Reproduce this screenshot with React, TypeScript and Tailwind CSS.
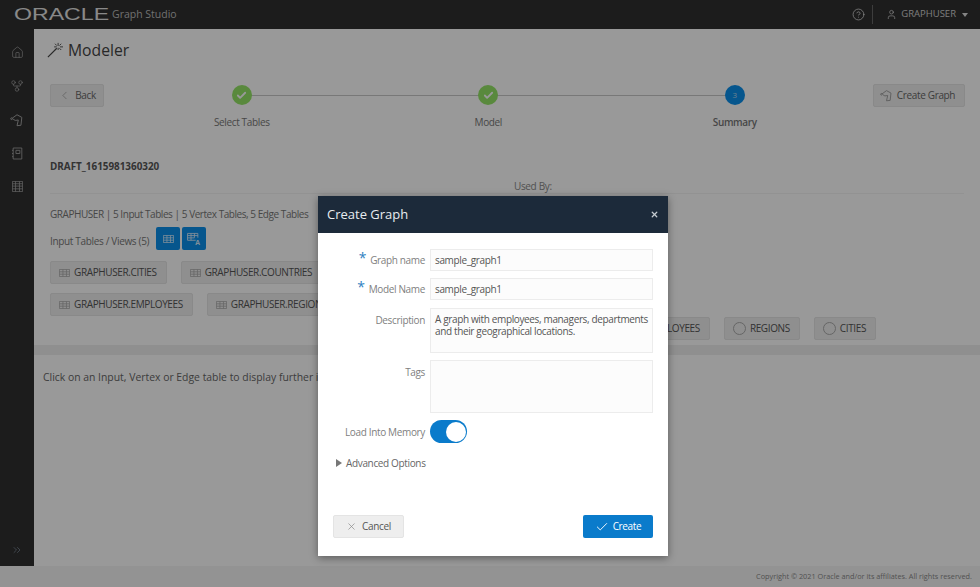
import React from 'react'
import { Check, ChevronLeft, ChevronsRight, CircleHelp, House, User, X, GitFork } from 'lucide-react'

function TableIcon({ className = '' }: { className?: string }) {
  return (
    <svg viewBox="0 0 14 10" className={className} fill="none" stroke="currentColor" strokeWidth="1">
      <path d="M.5.5h13v9H.5zM.5 3.500h13M.5 6.500h13M5 .5v9M9.500 .5v9" />
    </svg>
  )
}

function GraphIcon({ className = '' }: { className?: string }) {
  return (
    <svg viewBox="0 0 16 16" className={className} fill="none" stroke="currentColor" strokeWidth="1.1">
      <path d="M2.500 6 8 2l5.500 3-1 9-4.500.5L9.500 8 6 8.500 3.500 7" />
      <circle cx="1.800" cy="6.500" r="1" />
    </svg>
  )
}

function WandIcon({ className = '' }: { className?: string }) {
  return (
    <svg viewBox="0 0 18 18" className={className} fill="none" stroke="currentColor" strokeWidth="1">
      <path d="M1 17 11 7" strokeWidth="1.300" />
      <path d="M12.500 1v3.500M12.500 6.500V9M8 5.500h3M14.500 5.500H18M9 2l2 2M16 2l-2 2M14 7l2 2" />
    </svg>
  )
}

function NotebookIcon({ className = '' }: { className?: string }) {
  return (
    <svg viewBox="0 0 14 16" className={className} fill="none" stroke="currentColor" strokeWidth="1.1">
      <path d="M1.500 1h11v14h-11zM5 4h5v4H5z" />
      <path d="M0 4h1.500M0 8h1.500M0 12h1.500" />
    </svg>
  )
}

function PanelIcon({ className = '' }: { className?: string }) {
  return (
    <svg viewBox="0 0 14 14" className={className} fill="none" stroke="currentColor" strokeWidth="1">
      <path d="M.5.5h13v13H.5zM.5 3.500h13M.5 6.500h13M.5 10h13M4.500 .5v13M9.500 .5v13" />
    </svg>
  )
}

function TableLetterIcon({ className = '' }: { className?: string }) {
  return (
    <svg viewBox="0 0 16 14" className={`overflow-visible ${className}`} fill="none" stroke="currentColor" strokeWidth="1">
      <path d="M10 8.500H.5V.5h12v5M.5 3h12M.5 5.700h8M4.500 .5v8M8.500 .5v5" />
      <text x="9.500" y="13.500" fontSize="8" fontWeight="700" fill="currentColor" stroke="none">A</text>
    </svg>
  )
}

function Chip({ label, circle }: { label: string; circle?: boolean }) {
  return (
    <div className="h-[23px] flex items-center shrink-0 pl-[8px] pr-[9px] gap-[4px] bg-[#eeeeee] border border-[#e4e4e4] rounded-[2px] text-[#555] text-[10px] tracking-[-0.38px]">
      {circle ? (
        <span className="w-[13px] h-[13px] rounded-full border border-[#aaa]" />
      ) : (
        <TableIcon className="w-[11px] h-[8px] text-[#aaa]" />
      )}
      <span>{label}</span>
    </div>
  )
}

function Step({ label, done, num, bold }: { label: string; done?: boolean; num?: string; bold?: boolean }) {
  return (
    <div className="w-[246.5px] flex flex-col items-center">
      <div className={`relative w-[20px] h-[20px] rounded-full flex items-center justify-center text-[8px] text-[#bcd8ee] ${done ? 'bg-[#94e566]' : 'bg-[#0a90ec]'}`}>
        {done ? <Check className="w-[11px] h-[11px] text-white" strokeWidth={4} /> : num}
      </div>
      <span className={`mt-[10px] leading-[14px] text-[10px] tracking-[-0.35px] text-[#777] ${bold ? 'font-semibold' : ''}`}>{label}</span>
    </div>
  )
}

function Field({ label, req, value, area }: { label: string; req?: boolean; value?: string; area?: string }) {
  return (
    <div className="flex gap-[5px]">
      <div className={`w-[92px] shrink-0 text-right text-[10px] tracking-[-0.35px] leading-[14px] text-[#808080] whitespace-nowrap ${area ? 'pt-[5px]' : 'pt-[3px]'}`}>
        {req && <span className="text-[#2f7fc1] text-[14px] leading-none mr-[4px] relative -top-[1px]">*</span>}
        {label}
      </div>
      <div className={`w-[223px] border border-[#ececec] bg-[#fcfcfc] px-[4px] text-[10px] tracking-[-0.36px] leading-[12px] text-[#555] ${area ? `${area} pt-[4px]` : 'h-[22px] flex items-center'}`}>
        {value}
      </div>
    </div>
  )
}

export default function App() {
  return (
    <div className="relative w-[980px] h-[587px] overflow-hidden bg-white font-['Open_Sans','Noto_Sans',sans-serif] flex flex-col">
      <header className="h-[29px] shrink-0 bg-[#2f2f2f] flex items-center pl-[14px] pr-[12px] text-[#dddddd]">
        <span className="font-['Liberation_Sans',sans-serif] text-[17px] leading-none inline-block w-[94px] origin-left scale-x-[1.36] text-[#e4e4e4]">ORACLE</span>
        <span className="text-[10.500px] ml-[4px] text-[#bdbdbd]">Graph Studio</span>
        <div className="ml-auto flex items-center text-[#e0e0e0]">
          <CircleHelp className="w-[13px] h-[13px]" strokeWidth={1.4} />
          <span className="w-px h-[19px] bg-[#666] ml-[7px] mr-[13px]" />
          <User className="w-[11px] h-[11px]" strokeWidth={1.5} />
          <span className="text-[9.500px] ml-[4px] text-[#cfcfcf]">GRAPHUSER</span>
          <span className="ml-[6px] w-0 h-0 border-x-[3.500px] border-x-transparent border-t-[4.500px] border-t-[#ddd]" />
        </div>
      </header>

      <div className="flex flex-1 min-h-0">
        <nav className="w-[34px] shrink-0 bg-[#2f2f2f] flex flex-col items-center pt-[7px] text-[#a5a5a5]">
          <span className="h-[33.500px] flex items-center"><House className="w-[13px] h-[13px]" strokeWidth={1.3} /></span>
          <span className="h-[33.500px] flex items-center"><GitFork className="w-[14px] h-[14px]" strokeWidth={1.2} /></span>
          <span className="h-[33.500px] flex items-center"><GraphIcon className="w-[14px] h-[14px]" /></span>
          <span className="h-[33.500px] flex items-center"><NotebookIcon className="w-[11px] h-[13px]" /></span>
          <span className="h-[33.500px] flex items-center"><PanelIcon className="w-[11px] h-[11px]" /></span>
          <ChevronsRight className="mt-auto mb-[10px] w-[12px] h-[12px] text-[#7c8a99]" strokeWidth={1.5} />
        </nav>

        <main className="flex-1 min-w-0 bg-white flex flex-col">
          <div className="flex items-center gap-[5px] pl-[13px] h-[55px] pb-[13px] text-[#444]">
            <WandIcon className="w-[16px] h-[16px]" />
            <span className="text-[15.700px] leading-[20px] text-[#444]">Modeler</span>
          </div>

          <div className="flex items-start pl-[16px] h-[75px]">
            <button className="w-[54px] h-[23px] bg-[#eeeeee] border border-[#e4e4e4] rounded-[2px] flex items-center justify-center gap-[4px] text-[10px] tracking-[-0.35px] text-[#666]">
              <ChevronLeft className="w-[13px] h-[13px] text-[#999]" strokeWidth={1.3} />
              Back
            </button>
            <div className="relative ml-[14.500px] mt-[1px] flex">
              <div className="absolute top-[10px] left-[123px] w-[493px] h-px bg-[#c9c9c9]" />
              <Step label="Select Tables" done />
              <Step label="Model" done />
              <Step label="Summary" num="3" bold />
            </div>
            <button className="ml-[15px] w-[92px] h-[23px] shrink-0 bg-[#eeeeee] border border-[#e4e4e4] rounded-[2px] flex items-center justify-center gap-[4px] pr-[3px] text-[10px] tracking-[-0.35px] text-[#666]">
              <GraphIcon className="w-[13px] h-[13px] text-[#999]" />
              Create Graph
            </button>
          </div>

          <div className="pl-[16px] text-[9.900px] font-bold text-[#555] h-[14px] leading-[14px]">DRAFT_1615981360320</div>

          <div className="h-[21px] pt-[6px] ml-[16px] mr-[16px] border-b border-[#f4f4f4] text-[10px] tracking-[-0.35px] leading-[14px] text-[#888]">
            <span className="ml-[464px]">Used By:</span>
          </div>

          <div className="flex h-[151px]">
            <div className="w-[480px] shrink-0 pl-[16px]">
              <div className="pt-[13px] text-[10px] tracking-[-0.45px] leading-[14px] text-[#777] whitespace-nowrap">GRAPHUSER | 5 Input Tables | 5 Vertex Tables, 5 Edge Tables</div>
              <div className="mt-[6px] flex items-center gap-[7px] text-[10px] tracking-[-0.33px] text-[#777]">
                <span className="pt-[5px]">Input Tables / Views (5)</span>
                <div className="flex gap-[2px]">
                  <span className="w-[24px] h-[23px] bg-[#0a90ec] rounded-[2px] flex items-center justify-center text-[#d8eeff]"><TableIcon className="w-[11px] h-[8px]" /></span>
                  <span className="w-[24px] h-[23px] bg-[#0a90ec] rounded-[2px] flex items-center justify-center text-[#d8eeff]"><TableLetterIcon className="w-[14px] h-[12px]" /></span>
                </div>
              </div>
              <div className="mt-[11px] flex gap-[14px]">
                <Chip label="GRAPHUSER.CITIES" />
                <Chip label="GRAPHUSER.COUNTRIES" />
              </div>
              <div className="mt-[9px] flex gap-[14px]">
                <Chip label="GRAPHUSER.EMPLOYEES" />
                <Chip label="GRAPHUSER.REGIONS" />
              </div>
            </div>
            <div className="flex-1 pt-[123px] pr-[104px] flex justify-end gap-[14px]">
              <Chip label="EMPLOYEES" circle />
              <Chip label="REGIONS" circle />
              <Chip label="CITIES" circle />
            </div>
          </div>

          <div className="h-[10px] bg-[#eeeeee] shrink-0" />
          <div className="flex-1 pl-[9px] pt-[14px] text-[10.400px] leading-[16px] text-[#666]">
            Click on an Input, Vertex or Edge table to display further information.
          </div>
        </main>
      </div>

      <footer className="h-[21px] shrink-0 bg-[#f6f6f6] flex items-center justify-end pr-[8px] text-[7.300px] text-[#888]">
        Copyright © 2021 Oracle and/or its affiliates. All rights reserved.
      </footer>

      <div className="absolute inset-0 bg-black/40">
        <div className="absolute left-[318px] top-[196px] w-[350px] h-[360px] bg-white shadow-[0_2px_8px_rgba(0,0,0,0.4)] flex flex-col">
          <div className="h-[37px] shrink-0 bg-[#1c2a3a] flex items-center justify-between px-[9px] text-white">
            <span className="text-[13px] text-[#e8ecef]">Create Graph</span>
            <X className="w-[9px] h-[9px] text-[#c5cbd1]" strokeWidth={3.5} />
          </div>
          <div className="flex-1 flex flex-col pl-[15px] pt-[16px] pb-[18px]">
            <div className="flex flex-col gap-[7px]">
              <Field label="Graph name" req value="sample_graph1" />
              <Field label="Model Name" req value="sample_graph1" />
              <div className="mt-px">
                <Field label="Description" area="h-[45px]" value="A graph with employees, managers, departments and their geographical locations." />
              </div>
              <Field label="Tags" area="h-[53px]" />
            </div>
            <div className="flex items-center gap-[5px] mt-[7px]">
              <span className="w-[92px] pt-px text-right text-[10px] tracking-[-0.35px] text-[#808080] whitespace-nowrap">Load Into Memory</span>
              <div className="w-[37px] h-[23px] rounded-full bg-[#0a7bcb] flex items-center justify-end pr-[1px]">
                <span className="w-[20px] h-[20px] rounded-full bg-white" />
              </div>
            </div>
            <div className="flex items-center gap-[4px] mt-[13px] ml-[3px] text-[10px] tracking-[-0.35px] leading-[14px] text-[#666]">
              <span className="w-0 h-0 border-y-[4.500px] border-y-transparent border-l-[6px] border-l-[#777]" />
              Advanced Options
            </div>
            <div className="mt-auto flex justify-between pr-[15px]">
              <button className="w-[71px] h-[23px] bg-[#eeeeee] border border-[#e4e4e4] rounded-[2px] flex items-center justify-center gap-[5px] text-[10px] tracking-[-0.35px] text-[#555]">
                <X className="w-[11px] h-[11px] text-[#888]" strokeWidth={1.5} />
                Cancel
              </button>
              <button className="w-[70px] h-[23px] bg-[#0a7bcb] rounded-[2px] flex items-center justify-center gap-[4px] text-[10px] tracking-[-0.35px] text-white">
                <Check className="w-[14px] h-[14px]" strokeWidth={1.6} />
                Create
              </button>
            </div>
          </div>
        </div>
      </div>
    </div>
  )
}
